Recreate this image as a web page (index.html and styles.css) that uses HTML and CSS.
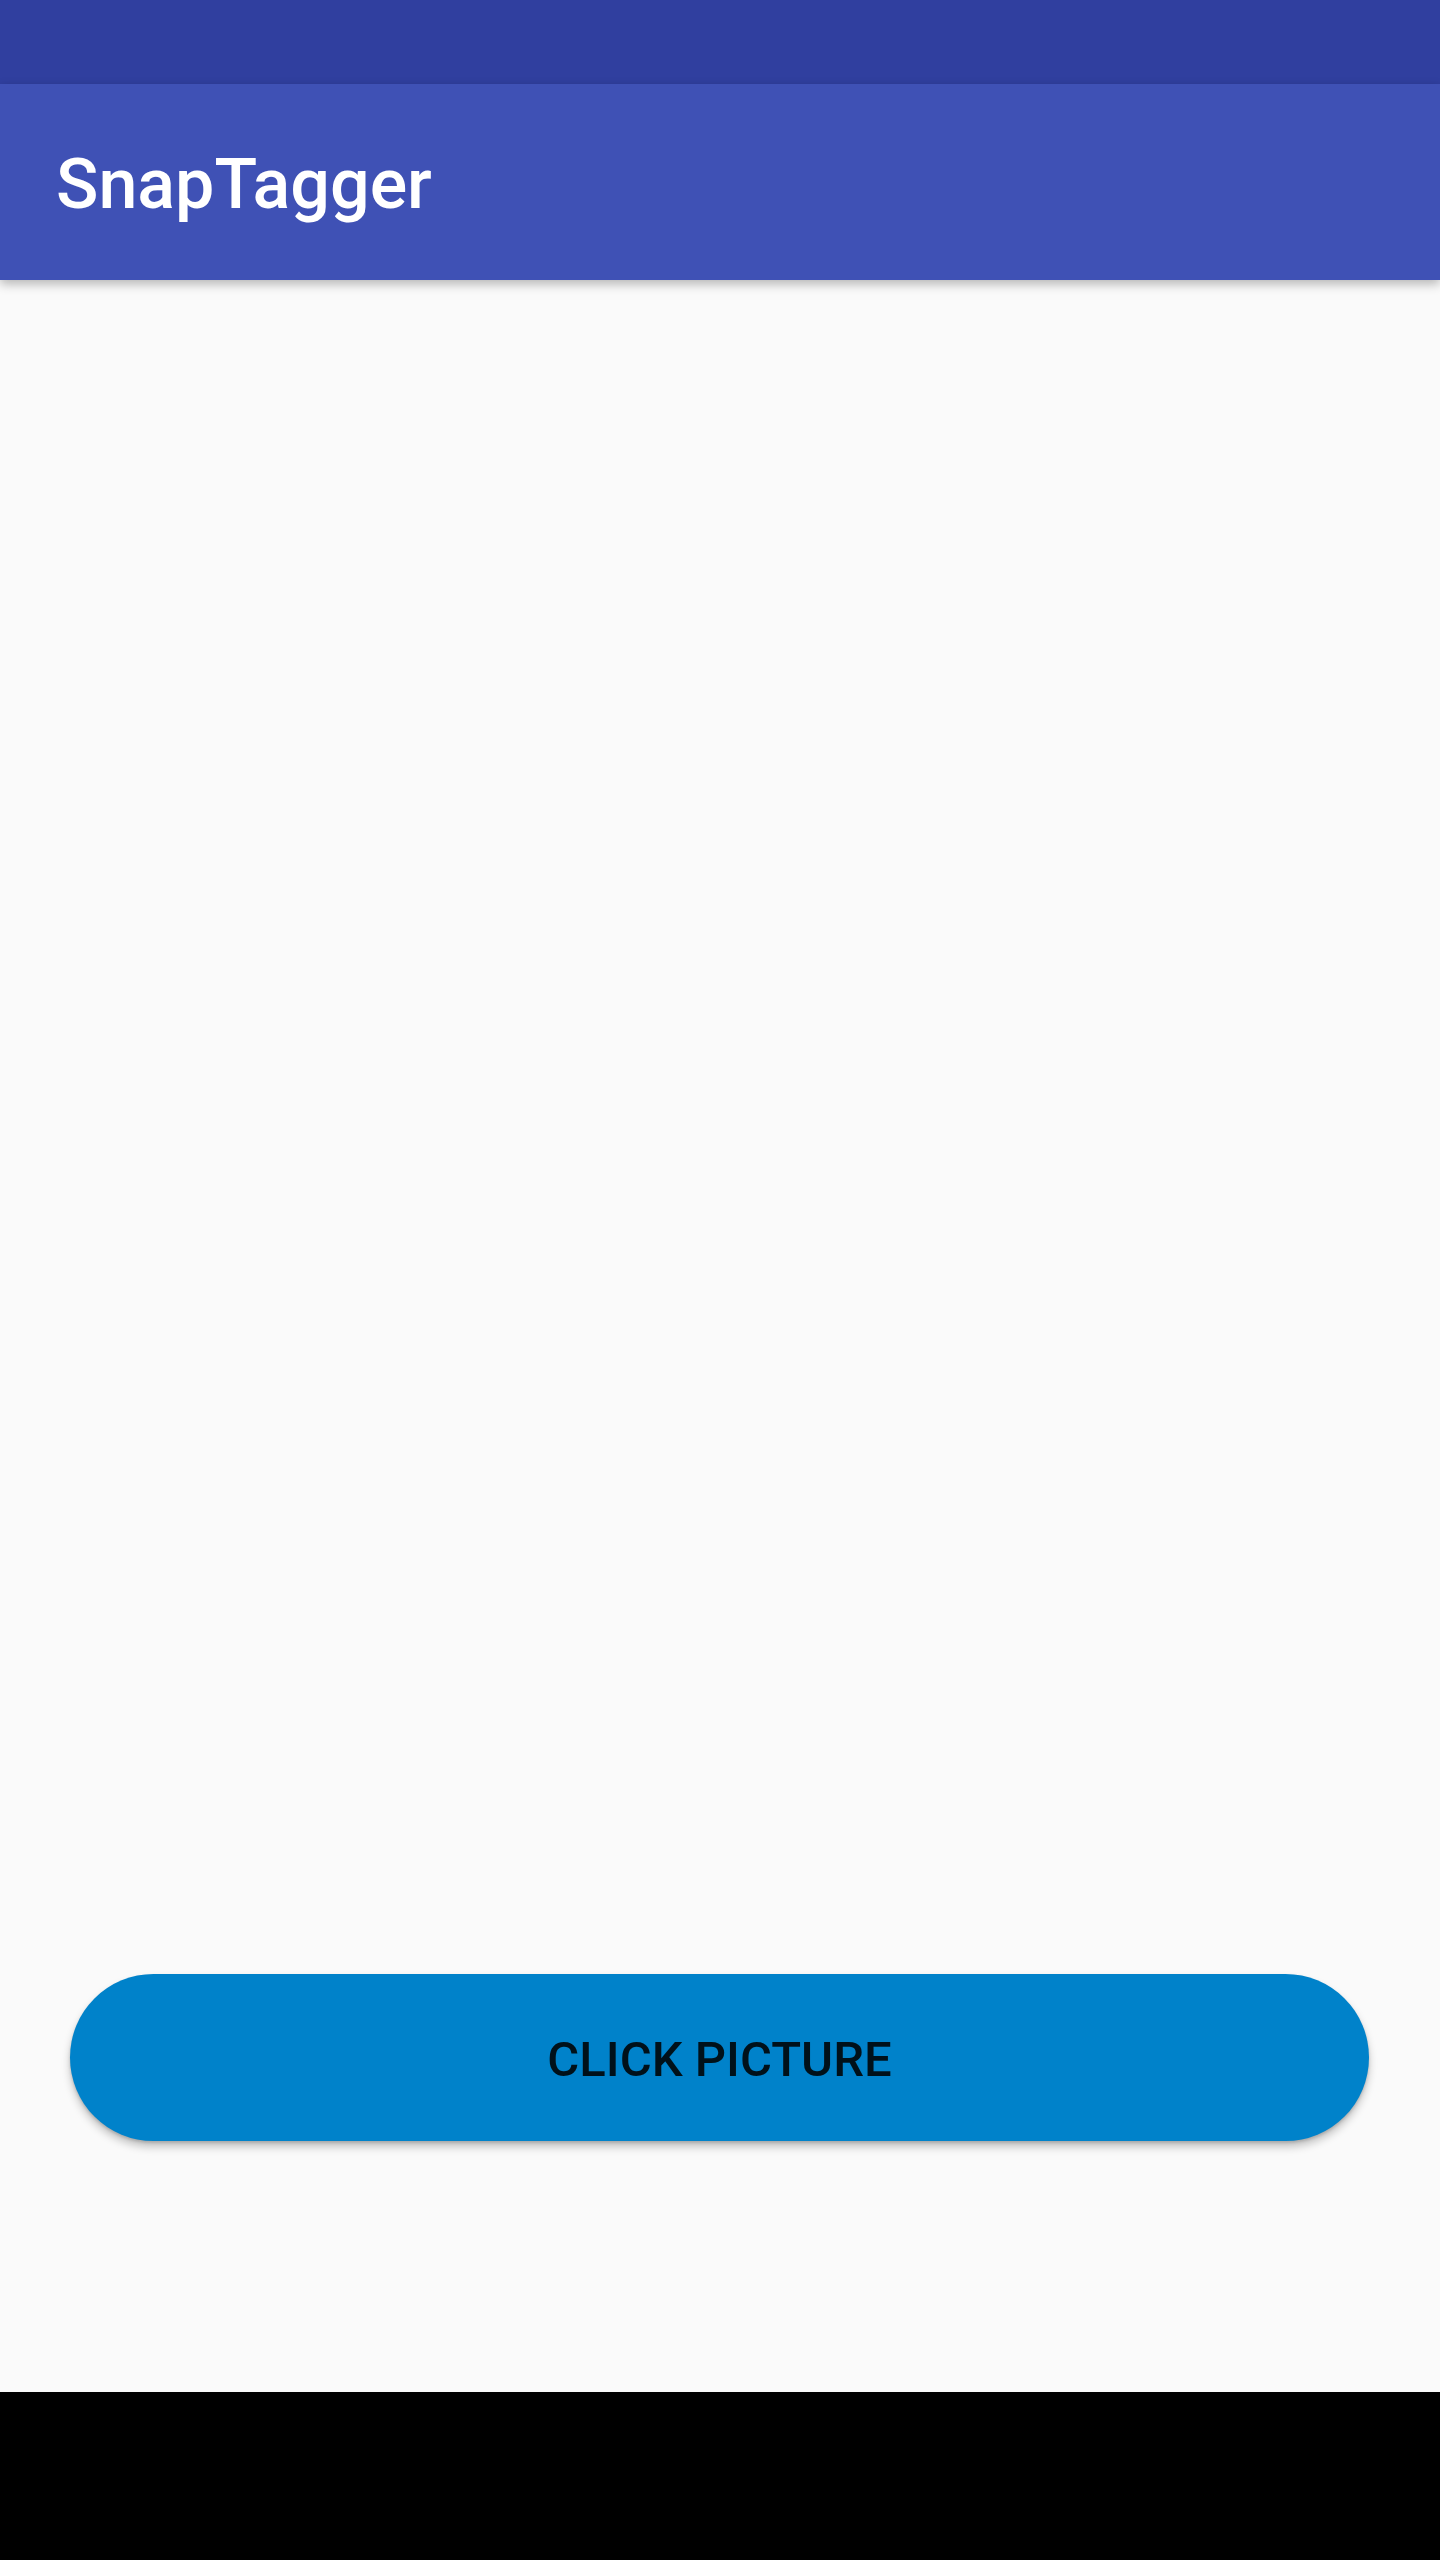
FILE: index.html
```html
<!DOCTYPE html>
<html lang="en">
<head>
    <meta charset="UTF-8">
    <meta name="viewport" content="width=device-width, initial-scale=1.0">
    <title>SnapTagger</title>
    <link rel="stylesheet" href="styles.css">
</head>
<body>
    <div class="screen">
        <div class="status-bar"></div>

        <!-- App Bar -->
        <header class="app-bar">
            <h1 class="title">SnapTagger</h1>
        </header>

        <main class="content">
            <button class="click-btn" id="clickPicture">Click Picture</button>
        </main>

        <div class="nav-bar"></div>
    </div>
</body>
</html>
```

FILE: styles.css
```css
* { box-sizing: border-box; margin: 0; padding: 0; }
body { background: #fafafa; font-family: Roboto, 'Noto Sans', sans-serif; }
.screen { display: flex; flex-direction: column; height: 100vh; }

.status-bar { height: 84px; background: #303f9f; flex-shrink: 0; }

/* App Bar */
.app-bar {
    height: 196px; flex-shrink: 0; background: #3f51b5;
    display: flex; align-items: center; padding-left: 56px;
    box-shadow: 0 4px 10px rgba(0, 0, 0, 0.28);
    position: relative; z-index: 1;
}
.title { color: #fff; font-size: 70px; font-weight: 500; margin-top: 4px; }

.content {
    flex: 1; display: flex; flex-direction: column; justify-content: flex-end;
    padding: 0 71px 251px 70px;
}
.click-btn {
    height: 167px; width: 100%; border: none; border-radius: 84px;
    background: #0082ca; color: rgba(0, 0, 0, 0.87);
    font-family: Roboto, sans-serif; font-size: 49px; font-weight: 500;
    text-transform: uppercase; padding-top: 4px; cursor: pointer;
    box-shadow: 0 6px 8px rgba(0, 0, 0, 0.22), 0 2px 3px rgba(0, 0, 0, 0.15);
}

.nav-bar { height: 168px; background: #000; flex-shrink: 0; }
```
